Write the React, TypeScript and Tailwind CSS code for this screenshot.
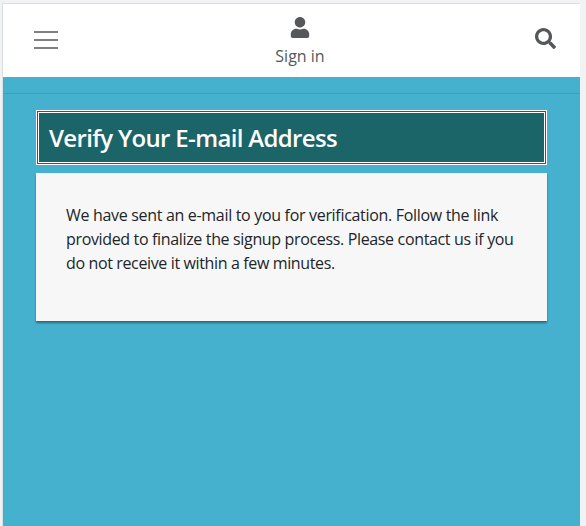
import { FaSearch, FaUser } from "react-icons/fa";

function Header() {
  return (
    <header className="flex h-[73px] items-start justify-between bg-white pl-[31px] pr-6 text-[#55585b]">
      <button aria-label="Menu" className="mt-[27px] flex w-6 flex-col gap-[6px]">
        <span className="h-0.5 w-full bg-[#808080]" />
        <span className="h-0.5 w-full bg-[#808080]" />
        <span className="h-0.5 w-full bg-[#808080]" />
      </button>
      <a className="mt-[13px] ml-[7px] flex flex-col items-center">
        <FaUser className="h-[21px] w-[20px]" />
        <span className="mt-[6px] text-base leading-6 whitespace-nowrap">Sign in</span>
      </a>
      <button aria-label="Search" className="mt-6">
        <FaSearch className="size-[21px]" />
      </button>
    </header>
  );
}

export default function App() {
  return (
    <div className="h-[526px] overflow-hidden bg-[#f1f2f4] pt-[3px] pr-[6px] pl-[2px] font-['Open_Sans','Noto_Sans',sans-serif]">
      <div className="h-full border-t border-l border-[#dcdfdf] bg-[#45b1ce]">
        <Header />
        <div className="h-[17px] border-b border-[#3d9fb9]" />
        <main className="mt-4 ml-[33px] w-[511px]">
          <h1 className="h-[55px] border-[3px] border-double border-white bg-[#1b6467] pl-[10px] text-[24px] leading-[50px] font-semibold whitespace-nowrap text-white">
            <span className="tracking-[-0.66px]">Verify Your E-mail Address</span>
          </h1>
          <section className="mt-2 h-[148px] bg-[#f7f7f7] px-[30px] pt-[30px] shadow-[0_2px_2px_rgba(0,0,0,0.4)]">
            <p className="text-base leading-6 whitespace-nowrap text-[#212529]">
              <span className="block tracking-[-0.315px]">We have sent an e-mail to you for verification. Follow the link</span>
              <span className="block tracking-[-0.345px]">provided to finalize the signup process. Please contact us if you</span>
              <span className="block tracking-[-0.365px]">do not receive it within a few minutes.</span>
            </p>
          </section>
        </main>
      </div>
    </div>
  );
}
